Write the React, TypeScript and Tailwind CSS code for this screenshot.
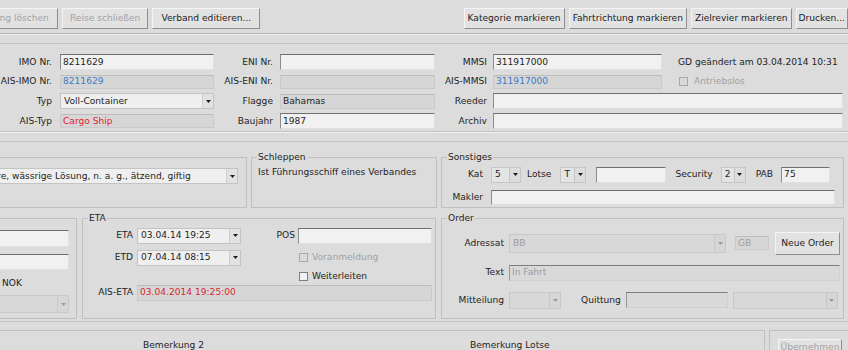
import React from "react";

type P = { className?: string; children?: React.ReactNode };

const Arrow = ({ dis = false }: { dis?: boolean }) => (
  <svg width="5" height="3" viewBox="0 0 5 3" className="block">
    <path d="M0 0H5L2.5 3Z" fill={dis ? "#9c9c9c" : "#1c1c1c"} />
  </svg>
);

function Lbl({ className = "", children }: P) {
  return <div className={`flex justify-end whitespace-nowrap shrink-0 ${className}`}>{children}</div>;
}

function TF({ className = "", children, v = "edit" }: P & { v?: "edit" | "ro" | "dis" }) {
  const s =
    v === "edit"
      ? "bg-[#f1f1f1] border-[#e0e0e0] border-t-[#707070] border-l-[#8c8c8c]"
      : v === "dis"
      ? "bg-[#d9d9d9] border-[#d0d0d0] border-t-[#7c7c7c] border-l-[#969696] text-[#9c9c9c]"
      : "bg-[#d6d6d6] border-[#cacaca] border-t-[#bcbcbc]";
  return (
    <div className={`flex items-center pl-[2px] whitespace-nowrap overflow-hidden shrink-0 border ${s} ${className}`}>
      {children}
    </div>
  );
}

function Combo({ className = "", children, v = "edit" }: P & { v?: "edit" | "btn" | "dis" }) {
  const box =
    v === "edit"
      ? "bg-[#efefef] border-[#c4c4c4]"
      : v === "btn"
      ? "bg-[#e4e4e4] border-[#c6c6c6]"
      : "bg-[#d8d8d8] border-[#c8c8c8] text-[#9c9c9c]";
  const arr =
    v === "edit" ? "bg-[#e2e2e2] border-[#cfcfcf]" : v === "btn" ? "bg-[#dcdcdc] border-[#c6c6c6]" : "bg-[#d6d6d6] border-[#c8c8c8]";
  return (
    <div className={`flex shrink-0 border ${box} ${className}`}>
      <div className="flex-1 min-w-0 flex items-center pl-[3px] whitespace-nowrap overflow-hidden">{children}</div>
      <div className={`w-[11px] shrink-0 flex items-center justify-center border-l ${arr}`}>
        <Arrow dis={v === "dis"} />
      </div>
    </div>
  );
}

function Btn({ className = "", children, dis = false }: P & { dis?: boolean }) {
  return (
    <div
      className={`flex items-center justify-center whitespace-nowrap shrink-0 bg-[#e2e2e2] border border-[#f4f4f4] border-r-[#8e8e8e] border-b-[#8e8e8e] ${
        dis ? "text-[#a2a2a2]" : "text-[#1c1c1c]"
      } ${className}`}
    >
      {children}
    </div>
  );
}

const CB = ({ dis = false }: { dis?: boolean }) => (
  <div className={`w-[9px] h-[9px] shrink-0 border ${dis ? "border-[#a8a8a8] bg-[#dadada]" : "border-[#7e7e7e] bg-[#f3f3f3]"}`} />
);

function FS({ className = "", title, children }: P & { title: string }) {
  return (
    <fieldset className={`border border-[#c0c0c0] shrink-0 min-w-0 ${className}`}>
      <legend className="ml-[5px] px-[1px] leading-[10.5px]">{title}</legend>
      {children}
    </fieldset>
  );
}

export default function App() {
  return (
    <div className="w-[848px] h-[350px] overflow-hidden bg-[#dcdcdc] text-[#1e1e1e] text-[9.1px] leading-[1.15] font-['DejaVu_Sans',sans-serif] flex flex-col">
      {/* Toolbar */}
      <div className="h-[34px] shrink-0 flex items-start pt-[8px] border-b border-[#b8b8b8]">
        <div className="flex gap-[4px] ml-[-37px]">
          <Btn dis className="px-[8px] h-[21px]">Meldung löschen</Btn>
          <Btn dis className="px-[7px] h-[21px]">Reise schließen</Btn>
          <Btn className="px-[8px] h-[21px]">Verband editieren...</Btn>
        </div>
        <div className="flex-1" />
        <div className="flex gap-[4px]">
          <Btn className="px-[3px] h-[21px]">Kategorie markieren</Btn>
          <Btn className="px-[3px] h-[21px]">Fahrtrichtung markieren</Btn>
          <Btn className="px-[3px] h-[21px]">Zielrevier markieren</Btn>
          <Btn className="px-[2px] h-[21px]">Drucken...</Btn>
        </div>
      </div>
      <div className="h-[10px] shrink-0 border-t border-[#f0f0f0] border-b border-b-[#c4c4c4]" />

      {/* Ship data */}
      <div className="h-[88px] shrink-0 pt-[10px] border-b border-[#c4c4c4] flex flex-col">
        <div className="flex items-center h-[16px]">
          <Lbl className="w-[52px]">IMO Nr.</Lbl>
          <TF className="ml-[8px] w-[154px] h-[16px]">8211629</TF>
          <Lbl className="w-[59px]">ENI Nr.</Lbl>
          <TF className="ml-[7px] w-[155px] h-[16px]" />
          <Lbl className="w-[52px]">MMSI</Lbl>
          <TF className="ml-[6px] w-[169px] h-[16px]">311917000</TF>
          <div className="ml-[16px] whitespace-nowrap">GD geändert am 03.04.2014 10:31</div>
        </div>
        <div className="flex items-center h-[15px] mt-[4px]">
          <Lbl className="w-[52px]">AIS-IMO Nr.</Lbl>
          <TF v="ro" className="ml-[8px] w-[154px] h-[14px] text-[#3a7bc8]">8211629</TF>
          <Lbl className="w-[59px]">AIS-ENI Nr.</Lbl>
          <TF v="ro" className="ml-[7px] w-[155px] h-[14px]" />
          <Lbl className="w-[52px]">AIS-MMSI</Lbl>
          <TF v="ro" className="ml-[6px] w-[169px] h-[14px] text-[#3a7bc8]">311917000</TF>
          <div className="ml-[17px] flex items-center text-[#a0a0a0] whitespace-nowrap">
            <CB dis />
            <span className="ml-[6px]">Antriebslos</span>
          </div>
        </div>
        <div className="flex items-center h-[16px] mt-[4px]">
          <Lbl className="w-[52px]">Typ</Lbl>
          <Combo className="ml-[8px] w-[154px] h-[16px]">Voll-Container</Combo>
          <Lbl className="w-[59px]">Flagge</Lbl>
          <TF v="ro" className="ml-[7px] w-[155px] h-[15px]">Bahamas</TF>
          <Lbl className="w-[52px]">Reeder</Lbl>
          <TF className="ml-[6px] w-[350px] h-[16px]" />
        </div>
        <div className="flex items-center h-[16px] mt-[4px]">
          <Lbl className="w-[52px]">AIS-Typ</Lbl>
          <TF v="ro" className="ml-[8px] w-[154px] h-[14px] text-[#e0222c]">Cargo Ship</TF>
          <Lbl className="w-[59px]">Baujahr</Lbl>
          <TF className="ml-[7px] w-[155px] h-[16px]">1987</TF>
          <Lbl className="w-[52px]">Archiv</Lbl>
          <TF className="ml-[6px] w-[350px] h-[16px]" />
        </div>
      </div>
      <div className="h-[10px] shrink-0 border-t border-[#f0f0f0] border-b border-b-[#c4c4c4]" />

      {/* Middle row */}
      <div className="h-[67px] shrink-0 pt-[10px] flex items-start">
        <div className="ml-[-32px] w-[279px] h-[51px] mt-[5px] border border-[#c0c0c0] shrink-0 pt-[10px] pl-[7px]">
          <Combo className="w-[262px] h-[16px]">Säure, wässrige Lösung, n. a. g., ätzend, giftig</Combo>
        </div>
        <FS title="Schleppen" className="ml-[4px] w-[186px] h-[56px]">
          <div className="pl-[6px] mt-[4px] whitespace-nowrap">Ist Führungsschiff eines Verbandes</div>
        </FS>
        <FS title="Sonstiges" className="ml-[4px] w-[403px] h-[56px]">
          <div className="flex items-center h-[16px] mt-[4px] whitespace-nowrap">
            <Lbl className="w-[41px]">Kat</Lbl>
            <Combo v="btn" className="ml-[8px] w-[30px] h-[16px]">5</Combo>
            <div className="ml-[6px]">Lotse</div>
            <Combo v="btn" className="ml-[9px] w-[26px] h-[16px]">T</Combo>
            <TF className="ml-[10px] w-[70px] h-[16px]" />
            <div className="ml-[9px]">Security</div>
            <Combo v="btn" className="ml-[8px] w-[25px] h-[16px]">2</Combo>
            <div className="ml-[10px]">PAB</div>
            <TF className="ml-[8px] w-[49px] h-[16px]">75</TF>
          </div>
          <div className="flex items-center h-[15px] mt-[7px]">
            <Lbl className="w-[41px]">Makler</Lbl>
            <TF className="ml-[8px] w-[344px] h-[15px]" />
          </div>
        </FS>
      </div>

      {/* ETA row */}
      <div className="h-[110px] shrink-0 pt-[4px] flex items-start">
        <div className="ml-[-100px] w-[177px] h-[101px] mt-[5px] border border-[#c0c0c0] shrink-0 flex flex-col items-end pr-[7px]">
          <TF className="mt-[11px] w-[168px] h-[17px]" />
          <TF className="mt-[7px] w-[168px] h-[16px]" />
          <div className="self-stretch pl-[101px] mt-[8px] h-[11px] flex items-center">NOK</div>
          <Combo v="dis" className="mt-[6px] w-[167px] h-[18px]" />
        </div>
        <FS title="ETA" className="ml-[5px] w-[354px] h-[106px]">
          <div className="flex items-center h-[16px] mt-[4px]">
            <Lbl className="w-[50px]">ETA</Lbl>
            <Combo className="ml-[4px] w-[104px] h-[16px]">03.04.14 19:25</Combo>
            <Lbl className="w-[54px]">POS</Lbl>
            <TF className="ml-[3px] w-[134px] h-[16px]" />
          </div>
          <div className="flex items-center h-[16px] mt-[6px]">
            <Lbl className="w-[50px]">ETD</Lbl>
            <Combo className="ml-[4px] w-[104px] h-[16px]">07.04.14 08:15</Combo>
            <div className="ml-[58px] flex items-center text-[#a0a0a0] whitespace-nowrap">
              <CB dis />
              <span className="ml-[4px]">Voranmeldung</span>
            </div>
          </div>
          <div className="flex items-center h-[10px] mt-[6px] pl-[216px] whitespace-nowrap">
            <CB />
            <span className="ml-[4px]">Weiterleiten</span>
          </div>
          <div className="flex items-center h-[16px] mt-[3px]">
            <Lbl className="w-[50px]">AIS-ETA</Lbl>
            <TF v="ro" className="ml-[4px] w-[295px] h-[16px] text-[#d8262f]">03.04.2014 19:25:00</TF>
          </div>
        </FS>
        <FS title="Order" className="ml-[5px] w-[403px] h-[106px]">
          <div className="flex items-center h-[23px] mt-[8px]">
            <Lbl className="w-[62px]">Adressat</Lbl>
            <Combo v="dis" className="ml-[5px] w-[217px] h-[19px]">BB</Combo>
            <TF v="ro" className="ml-[9px] w-[34px] h-[14px] text-[#a0a0a0]">GB</TF>
            <Btn className="ml-[6px] w-[65px] h-[23px]">Neue Order</Btn>
          </div>
          <div className="flex items-center h-[16px] mt-[10px]">
            <Lbl className="w-[62px]">Text</Lbl>
            <TF v="dis" className="ml-[5px] w-[331px] h-[16px]">In Fahrt</TF>
          </div>
          <div className="flex items-center h-[17px] mt-[11px] whitespace-nowrap">
            <Lbl className="w-[62px]">Mitteilung</Lbl>
            <Combo v="dis" className="ml-[5px] w-[52px] h-[17px]" />
            <div className="ml-[20px]">Quittung</div>
            <TF v="dis" className="ml-[5px] w-[102px] h-[16px]" />
            <Combo v="dis" className="ml-[5px] w-[105px] h-[17px]" />
          </div>
        </FS>
      </div>

      {/* Bottom */}
      <div className="h-[3px] shrink-0 border-b border-[#c6c6c6]" />
      <div className="h-[8px] shrink-0" />
      <div className="flex flex-1 min-h-0">
        <div className="ml-[-10px] w-[775px] border-t border-r border-[#c0c0c0] shrink-0 flex items-start pt-[9px] whitespace-nowrap">
          <span className="ml-[153px]">Bemerkung 2</span>
          <span className="ml-[266px]">Bemerkung Lotse</span>
        </div>
        <div className="ml-[4px] flex-1 border-t border-l border-[#c0c0c0] pt-[8px] pl-[8px]">
          <Btn dis className="w-[64px] h-[14px] items-start pt-[2px]">Übernehmen</Btn>
        </div>
      </div>
    </div>
  );
}
